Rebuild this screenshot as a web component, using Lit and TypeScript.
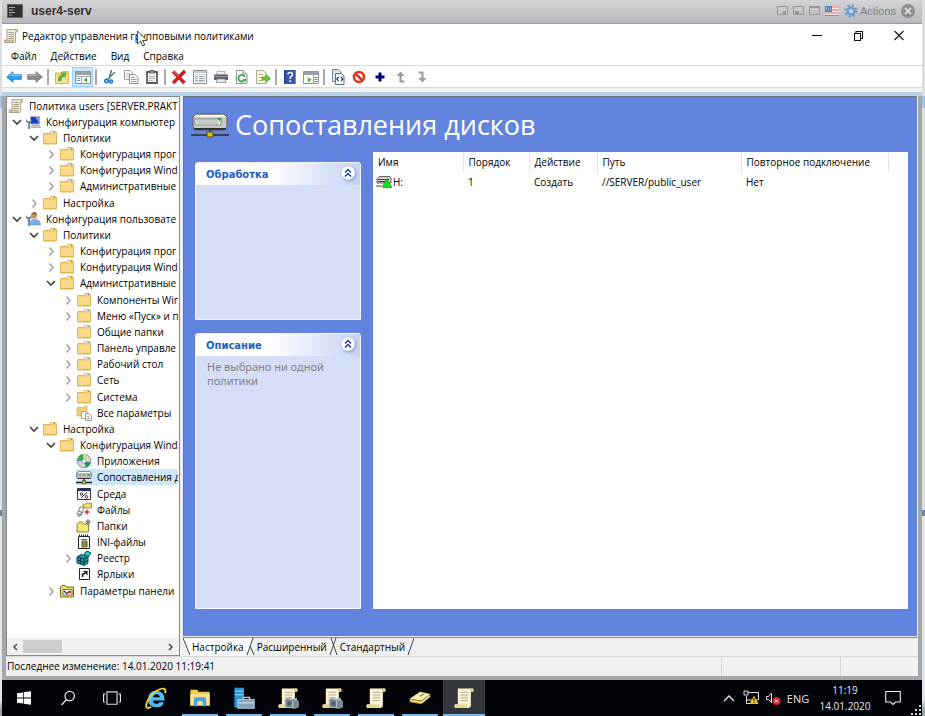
import { LitElement, html, svg, css, nothing } from "lit";
import { customElement, property } from "lit/decorators.js";
import { classMap } from "lit/directives/class-map.js";

const scroll = svg`
  <path d="M4 1.500H14.500V4H12.500V13.500Q12.500 14.500 11 14.500H1.500V12H4Z" fill="#f1ead0" stroke="#9c927a" stroke-width=".8"/>
  <path d="M1.500 12.200H10V14.500H2Z" fill="#d8cb94" stroke="#9c927a" stroke-width=".6"/>
  <path d="M12.500 1.500H14.500V4H12.500Z" fill="#cdbf88"/>
  <path d="M5.500 4.500H11M5.500 6.500H11M5.500 8.500H11M5.500 10.500H11" stroke="#8f8b80" stroke-width=".8"/>`;

const parchment = svg`
  <path d="M3.500 1H14.500Q15.500 2 14.500 3.500H13V14L11.500 15.200H1.500Q.500 14 1.500 12.500H3.500Z" fill="#fbf4d2"/>
  <path d="M12.500 1H14.500Q15.500 2 14.500 3.500H12.500Z" fill="#dcca7c"/>
  <path d="M1.500 12.800H10.500V15.200H1.500Q.500 14 1.500 12.800Z" fill="#e6d68e"/>
  <path d="M5.500 3.800H11M5.500 5.800H11M5.500 7.800H11M5.500 9.800H11" stroke="#b3ac92" stroke-width=".8"/>`;

const folder = svg`
  <path d="M1.500 3.500H8.500V2Q8.500 1.500 9 1.500H13.500L14.500 2.500V14H1.500Z" fill="#f4cd6e" stroke="#dca943" stroke-width=".8"/>
  <path d="M2 5H14V13.500H2Z" fill="#fbdb8b"/><path d="M9.500 2.500H13" stroke="#fff"/><path d="M11.500 2.500H13" stroke="#3e8fe0"/>
  <path d="M2 13.500H14" stroke="#e3b350"/>`;

const page = svg`<path d="M2.500 1.500H9L13 5V14.500H2.500Z" fill="#fff" stroke="#8d9298"/><path d="M9 1.500V5H13" fill="#dfe6ee" stroke="#8d9298"/>`;

const drive = svg`
  <path d="M3 2.500H14L15.500 4V8L14 9.500H2L.500 8V4Z" fill="#bdbdbd" stroke="#777" stroke-width=".8"/>
  <path d="M2.500 3.500H14" stroke="#f4f4f4"/><path d="M2 6H10" stroke="#8f8f8f"/><path d="M11.500 5H14V7H11.500Z" fill="#20b34c"/>
  <path d="M1.500 9.500H14.500" stroke="#333"/><path d="M8 10V13M0 13.500H16" stroke="#222" stroke-width="1.400"/><path d="M6.500 11.500H9.500V15H6.500Z" fill="#d7c22e" stroke="#333" stroke-width=".6"/>`;

const tools = svg`
  <path d="M6 9L8 8L9.500 9H14L15.500 10.500V14.500L13 15.500L6 14.500Z" fill="#74858f" stroke="#aebbc3" stroke-width=".6"/>
  <path d="M7.500 7.500H10V9H7.500ZM12 8H14.500V10H12Z" fill="#9fb0ba"/><circle cx="9" cy="12" r="1.500" fill="#4d5c66"/><path d="M11.500 10V15" stroke="#c8d2d8" stroke-width=".7"/>`;

const ICONS: Record<string, unknown> = {
  scroll,
  folder,
  drive,
  back: svg`<path d="M.7 8L7 2.700V5.700H15.300V10.300H7V13.300Z" fill="#2f9fe8" stroke="#1677bf" stroke-width=".8"/><path d="M3 7.500L6.500 4.600V6.600H14.500" fill="none" stroke="#8fd2fb"/>`,
  forward: svg`<path d="M15.300 8L9 2.700V5.700H.7V10.300H9V13.300Z" fill="#8c8c8c" stroke="#6d6d6d" stroke-width=".8"/><path d="M1.500 6.600H9.500V4.800" fill="none" stroke="#b8b8b8"/>`,
  up: svg`<path d="M1.500 4H7L8.500 2.500H14.500V14.500H1.500Z" fill="#f6cf73" stroke="#dcb562"/><path d="M2 6H14V14H2Z" fill="#f9dc91"/><path d="M4 12V9.500Q4.500 6.500 8 5.500L6.500 3.500L12.500 3.500L11.500 9L10 7.500Q7.500 8.500 7 12Z" fill="#58b238"/>`,
  tree: svg`<path d="M.5 2.500H15.500V14.500H.5Z" fill="#fff" stroke="#90949a"/><path d="M1 3H15V6H1Z" fill="#9aa0a8"/><path d="M1 7.500H15M6.500 8V14" stroke="#a6a6a6"/><path d="M2 9.500H5M2 11.500H5" stroke="#6f8fb5"/><path d="M12 8.500V13.500L8.500 11Z" fill="#40b52c"/>`,
  panes: svg`<path d="M.5 2.500H15.500V14.500H.5Z" fill="#fff" stroke="#90949a"/><path d="M1 3H15V6H1Z" fill="#9aa0a8"/><path d="M10.500 6V14" stroke="#a6a6a6"/><path d="M11.500 8.500H14.500M11.500 10.500H14.500M11.500 12.500H14.500" stroke="#4e80b9"/><path d="M5 8V13.500L8.500 10.700Z" fill="#40b52c"/>`,
  cut: svg`<path d="M9.500 1L7 10M13 3L5.500 10.500" stroke="#5d7fa0" stroke-width="1.600"/><circle cx="4.500" cy="12" r="1.700" fill="none" stroke="#1f7ed2" stroke-width="1.700"/><circle cx="9" cy="12.500" r="1.500" fill="none" stroke="#1f7ed2" stroke-width="1.700"/>`,
  copy: svg`<path d="M1.500 1.500H7L9.500 4V10.500H1.500Z" fill="#fff" stroke="#959ba3"/><path d="M3 4.500H7M3 6.500H8M3 8.500H8" stroke="#bcc5cf"/><path d="M6.500 5.500H12L15 8.500V14.500H6.500Z" fill="#fff" stroke="#808891"/><path d="M8 8.500H12M8 10.500H13.500M8 12.500H13.500" stroke="#79a5cf"/>`,
  paste: svg`<path d="M3 3H13V14H3Z" fill="#eee" stroke="#5c5c5c" stroke-width="1.800"/><path d="M5.500 1.500H10.500V4H5.500Z" fill="#8e8e8e" stroke="#555" stroke-width=".7"/><path d="M5 7.500H11M5 9.500H11M5 11.500H9" stroke="#b5b5b5"/>`,
  remove: svg`<path d="M2 2.500L13.500 14M14 2L2 14" stroke="#d8191c" stroke-width="3.400"/><path d="M2.500 2.500L7.500 7.500" stroke="#f36a66"/>`,
  props: svg`<path d="M1.500 1.500H14.500V14.500H1.500Z" fill="#fff" stroke="#858b92"/><path d="M2 2H14V4H2Z" fill="#c4c9cf"/><path d="M3.500 5.500H12.500V12.500H3.500Z" fill="#f7f7f7" stroke="#b4b9bf" stroke-width=".7"/><path d="M4.500 7.500H5.500M4.500 9.500H5.500M4.500 11.500H5.500" stroke="#3376be"/><path d="M7 7.500H11.500M7 9.500H11.500M7 11.500H11.500" stroke="#999"/>`,
  print: svg`<path d="M4 2.500H12V6H4Z" fill="#f4f4f4" stroke="#999" stroke-width=".8"/><path d="M1 5.500H15V11H1Z" fill="#5d6369"/><path d="M1 7.500H15" stroke="#939aa1"/><path d="M4 10H12L13 13.500H3Z" fill="#dfe9f2" stroke="#888" stroke-width=".8"/>`,
  refresh: svg`${page}<path d="M10.800 8A3.300 3.300 0 1 0 10.500 11" fill="none" stroke="#36ad3c" stroke-width="1.800"/><path d="M12.500 9.500L8.500 10.500L12 13Z" fill="#36ad3c"/>`,
  export: svg`<path d="M1.500 1.500H8L11 4V14.500H1.500Z" fill="#fcf8dc" stroke="#aaa78a"/><path d="M3.500 5.500H8M3.500 8.500H8M3.500 11.500H8" stroke="#a9ad80"/><path d="M7 8H11V5.500L15.500 9.500L11 13.500V11H7Z" fill="#62c92e" stroke="#3b9522" stroke-width=".6"/>`,
  help: svg`<path d="M2 1H14V15H2Z" fill="#3456b3"/><path d="M2.500 1V15" stroke="#203c8a"/><path d="M13.500 1V15" stroke="#6d8bd8"/><path d="M6 5.500Q6 3.500 8.200 3.500Q10.500 3.500 10.500 5.500Q10.500 7 8.300 8.200V10" fill="none" stroke="#fff" stroke-width="1.500"/><path d="M7.500 11.300H9.100V13H7.500Z" fill="#fff"/>`,
  code: svg`<path d="M2.500.5H8L11 3V12.500H2.500Z" fill="#dce7f2" stroke="#6e8193"/><path d="M5.500 4.500H11L14 7V15.500H5.500Z" fill="#fff" stroke="#526c89"/><path d="M8.500 8L6.800 10L8.500 12M11 8L12.800 10L11 12" fill="none" stroke="#202da0" stroke-width="1.200"/>`,
  stop: svg`<circle cx="8" cy="8" r="5" fill="#fff" stroke="#e33218" stroke-width="2.500"/><path d="M4.500 4.500L11.500 11.500" stroke="#e33218" stroke-width="2.500"/>`,
  plus: svg`<path d="M8 3.500V12.500M3.500 8H12.500" stroke="#00007c" stroke-width="3"/>`,
  arrowUp: svg`<path d="M7.500 4V12.500H11.500" fill="none" stroke="#9a9a9a" stroke-width="2"/><path d="M7.500 2.500L11.500 7H3.500Z" fill="#9a9a9a"/>`,
  arrowDown: svg`<path d="M8.500 12V3.500H4.500" fill="none" stroke="#9a9a9a" stroke-width="2"/><path d="M8.500 13.500L12.500 9H4.500Z" fill="#9a9a9a"/>`,
  computer: svg`<path d="M5.500 2.500H14.500V10H5.500Z" fill="#1740c0" stroke="#a9aeb4"/><path d="M10 3H14V9Z" fill="#6e97ef"/><path d="M7 11H14L15.500 13.500H6Z" fill="#c4c8cc" stroke="#888" stroke-width=".5"/><path d="M1 5V8L3 9V15H5V9L6.500 8V5L5 7H2.500Z" fill="#6b89a5"/>`,
  user: svg`<circle cx="9" cy="4.500" r="3" fill="#c98e59"/><path d="M6.500 4Q7 1 9.500 1T12 4L9 3Z" fill="#8a6a50"/><path d="M5 14Q5 8 9 8Q15.500 8 15.500 14Z" fill="#77afe0" stroke="#6a9bc9" stroke-width=".6"/><path d="M1 4V7L3 8.500V15H5V8.500L6.500 7V4L5 6H2.500Z" fill="#6b89a5"/>`,
  allSettings: svg`<path d="M1 2.500H7L8 1.500H11V11H1Z" fill="#f6cf74" stroke="#d8a947" stroke-width=".7"/><path d="M5.500 6.500H9.500L11.500 8.500V13.500H5.500Z" fill="#fff" stroke="#8e9398" stroke-width=".8"/><path d="M9.500 8.500H13L15.500 11V15.500H9.500Z" fill="#fff" stroke="#7b8084" stroke-width=".8"/><path d="M11 11.500H13M11 13.500H14" stroke="#9ea4aa"/>`,
  disc: svg`<circle cx="8" cy="8" r="6.800" fill="#cfd8d8" stroke="#777f80" stroke-width=".8"/><path d="M8 8L1.500 6Q3 1.800 7 1.200Z" fill="#37ac4c"/><path d="M8 8L7 1.200Q9 1 10.500 1.500Z" fill="#d9e46b"/><path d="M8 8L14.700 9.500Q13 14 10 14.600Z" fill="#17975a"/><path d="M8 8L1.500 6L1.200 8Z" fill="#3b7fd0"/><circle cx="8" cy="8" r="2" fill="#fff" stroke="#777" stroke-width=".6"/>`,
  env: svg`<path d="M1.500 2.500H14.500V13.500H1.500Z" fill="#fff" stroke="#333"/><path d="M2 3H14V5H2Z" fill="#26268c"/><path d="M5 11.800L11 6.500" stroke="#333"/><circle cx="5.500" cy="8" r="1.300" fill="none" stroke="#333"/><circle cx="10.500" cy="10.800" r="1.300" fill="none" stroke="#333"/>`,
  files: svg`<path d="M7 2H10L11 1H15.500V6H7Z" fill="#eadc64" stroke="#817929" stroke-width=".7"/><path d="M4 5H8L7 9L3 15L1 12Z" fill="#f8f8ee" stroke="#6c6c66" stroke-width=".8"/><path d="M3 9L7 11M2 12L6 13" stroke="#333" stroke-width=".8"/><path d="M11 7.500V12.500M8.500 10H13.500" stroke="#e01c1c" stroke-width="1.300"/>`,
  folders: svg`<path d="M1 6L3 4H6L8 6H12.500V14H1Z" fill="#eae25c" stroke="#77721f" stroke-width=".8"/><path d="M2 8H12M2 10H12M2 12H12" stroke="#f9f6b5" stroke-width=".7"/><path d="M12 1V7M9 4H15M10 2L14 6M14 2L10 6" stroke="#5f5f55" stroke-width=".8"/>`,
  ini: svg`<path d="M2.500 2.500H13.500V14.500H2.500Z" fill="#fff" stroke="#222"/><path d="M3 1.500H13" stroke="#222" stroke-width="2" stroke-dasharray="1 1"/><path d="M5 5.500H11" stroke="#666"/><path d="M6 7H11V13H6Z" fill="#d2c936" stroke="#333" stroke-width=".8"/><path d="M6 9H11M6 11H11" stroke="#333" stroke-width=".8"/>`,
  registry: svg`<path d="M1 7L5 4.500L12 6V13L8 15.500L1 13Z" fill="#1599a3" stroke="#064c55"/><path d="M1 10L8 12.500L12 10M4.500 7.500V14M8 8.500V15M1 7L8 9L12 6.500" fill="none" stroke="#06353c"/><path d="M8 4L11 1L15 3L12 7Z" fill="#29c3c7" stroke="#064c55"/>`,
  shortcut: svg`<path d="M3.500 2.500H13.500V13.500H3.500Z" fill="#fff" stroke="#222"/><path d="M6.500 11V9Q6.500 7.500 9 7.500" fill="none" stroke="#111" stroke-width="1.500"/><path d="M7 5H11.500V9.500Z" fill="#111"/>`,
  control: svg`<path d="M1.500 4L3 2.500H6.500L8 4H14.500V14H1.500Z" fill="#ebe062" stroke="#77721f"/><path d="M4 6.500H13V12H4Z" fill="#f7f7f7" stroke="#444" stroke-width=".7"/><path d="M5 8L8 10.500L11 8.500" fill="none" stroke="#333" stroke-width="1.300"/><path d="M9 8H12V10H9Z" fill="#b23a2a"/>`,
  mapped: svg`<path d="M3 2.500H14L15 4V9H1V4.500Z" fill="#d2d2d2" stroke="#444" stroke-width=".8"/><path d="M2 5.500H13M2 7.500H12M0 12H14" stroke="#444"/><path d="M11 4.500L16 13.500H6Z" fill="#10df20" stroke="#168a1b" stroke-width=".6"/><path d="M5 11H7V14H5Z" fill="#d7c22e"/>`,
  start: svg`<path d="M1 3.200L7 2.400V7.600H1ZM7.700 2.300L15 1.200V7.600H7.700ZM1 8.400H7V13.600L1 12.800ZM7.700 8.400H15V14.800L7.700 13.700Z" fill="#fff"/>`,
  search: svg`<circle cx="9.700" cy="6" r="4.700" fill="none" stroke="#eee" stroke-width="1.200"/><path d="M6.500 9.500L1.500 15" stroke="#eee" stroke-width="1.200"/>`,
  taskview: svg`<path d="M3.500 2.500H12.500V13.500H3.500ZM2 4.500H.5V11.500H2M14 4.500H15.500V11.500H14" fill="none" stroke="#ddd"/>`,
  ie: svg`<path d="M13.800 11Q12.500 14.800 8.300 14.800Q2.200 14.500 2.200 8.700Q2.500 2.800 8.300 2.800Q14.500 3 14.300 9.800H5.800Q6 12.200 8.400 12.200Q9.900 12.200 10.600 11ZM5.900 7.500H10.800Q10.600 5.300 8.400 5.300Q6.200 5.300 5.900 7.500Z" fill="#4cbcf3" fill-rule="evenodd"/><path d="M14.500 4.500Q15.800 .8 12.500 1.200Q8 2 4 6.800Q.2 12 1 14.500Q1.800 16 4.500 14.500" fill="none" stroke="#f5c838" stroke-width="1.400"/>`,
  explorer: svg`<path d="M1 2H6L7 3.500H15V13.500H1Z" fill="#f3c64d"/><path d="M1 5H15V13.500H1Z" fill="#ffe08a"/><path d="M3.500 9Q3.500 7.500 5 7.500H11Q12.500 7.500 12.500 9V14H10V11Q8 9.500 6 11V14H3.500Z" fill="#43a7df"/>`,
  server: svg`<path d="M1 .5H8V15H1Z" fill="#2593d7"/><path d="M1.500 3H7.500M1.500 5.500H7.500" stroke="#8bd2fa"/><path d="M5.500 9H15.500V15.500H3.500V9Z" fill="#86a4b9" stroke="#c4d4df" stroke-width=".6"/><path d="M7.500 9V7.500H12V9" fill="none" stroke="#b6cad8"/><path d="M4 11.500H15" stroke="#c5d8e4"/>`,
  scrollTask: parchment,
  scrollTools: svg`${parchment}${tools}`,
  book: svg`<path d="M.5 8.500L8 3.500L15.500 5L9 10Z" fill="#f7edb6"/><path d="M.5 8.500L9 10L15.500 5V7.500L9 12.500L.5 11Z" fill="#b59b3a"/><path d="M1 9.800L9 11.300L15 6.500" fill="none" stroke="#fff2bd" stroke-width=".8"/><path d="M7 6.500L10 4.800L11.500 5.200L8.500 7Z" fill="#b09f55"/>`,
};

const icon = (name: string, cls = "i16") =>
  html`<svg class=${cls} viewBox="0 0 16 16" aria-hidden="true">${ICONS[name]}</svg>`;

type Node = [level: number, state: "" | "open" | "closed", icon: string, label: string];

const TREE: Node[] = [
  [0, "", "scroll", "Политика users [SERVER.PRAKT"],
  [1, "open", "computer", "Конфигурация компьютер"],
  [2, "open", "folder", "Политики"],
  [3, "closed", "folder", "Конфигурация прог"],
  [3, "closed", "folder", "Конфигурация Wind"],
  [3, "closed", "folder", "Административные"],
  [2, "closed", "folder", "Настройка"],
  [1, "open", "user", "Конфигурация пользовате"],
  [2, "open", "folder", "Политики"],
  [3, "closed", "folder", "Конфигурация прог"],
  [3, "closed", "folder", "Конфигурация Wind"],
  [3, "open", "folder", "Административные"],
  [4, "closed", "folder", "Компоненты Win"],
  [4, "closed", "folder", "Меню «Пуск» и п"],
  [4, "", "folder", "Общие папки"],
  [4, "closed", "folder", "Панель управле"],
  [4, "closed", "folder", "Рабочий стол"],
  [4, "closed", "folder", "Сеть"],
  [4, "closed", "folder", "Система"],
  [4, "", "allSettings", "Все параметры"],
  [2, "open", "folder", "Настройка"],
  [3, "open", "folder", "Конфигурация Wind"],
  [4, "", "disc", "Приложения"],
  [4, "", "drive", "Сопоставления д"],
  [4, "", "env", "Среда"],
  [4, "", "files", "Файлы"],
  [4, "", "folders", "Папки"],
  [4, "", "ini", "INI-файлы"],
  [4, "closed", "registry", "Реестр"],
  [4, "", "shortcut", "Ярлыки"],
  [3, "closed", "control", "Параметры панели"],
];

const TOOLS: [string, string][][] = [
  [["back", "Назад"], ["forward", "Вперед"]],
  [["up", "Вверх"], ["tree", "Дерево консоли"]],
  [["cut", "Вырезать"], ["copy", "Копировать"], ["paste", "Вставить"]],
  [["remove", "Удалить"], ["props", "Свойства"], ["print", "Печать"], ["refresh", "Обновить"], ["export", "Экспорт"]],
  [["help", "Справка"], ["panes", "Область действий"]],
  [["code", "XML"], ["stop", "Отключить"], ["plus", "Добавить"], ["arrowUp", "Выше"], ["arrowDown", "Ниже"]],
];

const base = css`
  * { box-sizing: border-box; }
  button { font: inherit; color: inherit; background: none; border: 0; padding: 0; margin: 0; }
  svg { display: block; flex: none; }
  .i16 { width: 16px; height: 16px; }
`;

@customElement("policy-tree")
class PolicyTree extends LitElement {
  static styles = [base, css`
    :host { display: flex; flex-direction: column; min-height: 0; overflow: hidden; background: #fff; border: 1px solid #868b92; }
    ul { list-style: none; margin: 0; padding: 0 1px 0 0; flex: 1; min-height: 0; overflow: hidden; }
    li { display: flex; align-items: center; height: 16px; white-space: nowrap; }
    li:nth-child(6n + 1) { height: 17px; }
    .l0 { padding-left: 1px; } .l1 { padding-left: 2px; } .l2 { padding-left: 19px; }
    .l3 { padding-left: 36px; } .l4 { padding-left: 53px; }
    .twist { width: 16px; height: 16px; flex: none; }
    .node { display: flex; align-items: center; flex: 1; min-width: 0; height: 16px; overflow: hidden; }
    .node span { padding-left: 5px; }
    .selected { background: #cce8ff; }
    .bar { display: flex; align-items: center; height: 17px; background: #f0f0f0; flex: none; }
    .bar button { width: 16px; height: 16px; }
    .thumb { width: 39px; height: 13px; background: #cdcdcd; }
    .space { flex: 1; }
  `];
  render() {
    return html`
      <ul role="tree">
        ${TREE.map(([level, state, ic, label]) => html`
          <li class="l${level}" role="treeitem">
            ${level ? (state ? html`<button class="twist" aria-label="Развернуть">
              <svg class="i16" viewBox="0 0 16 16">${state === "open"
                ? svg`<path d="M4 6L8 10L12 6" fill="none" stroke="#404040" stroke-width="1.600"/>`
                : svg`<path d="M6.500 4.500L10 8.500L6.500 12.500" fill="none" stroke="#a2a2a2" stroke-width="1.500"/>`}</svg>
            </button>` : html`<span class="twist"></span>`) : nothing}
            <div class=${classMap({ node: true, selected: ic === "drive" })}>${icon(ic)}<span>${label}</span></div>
          </li>`)}
      </ul>
      <div class="bar">
        <button aria-label="Влево"><svg class="i16" viewBox="0 0 16 16"><path d="M10 5L7 8L10 11" fill="none" stroke="#505050" stroke-width="1.600"/></svg></button>
        <div class="thumb"></div><div class="space"></div>
        <button aria-label="Вправо"><svg class="i16" viewBox="0 0 16 16"><path d="M6 5L9 8L6 11" fill="none" stroke="#505050" stroke-width="1.600"/></svg></button>
      </div>`;
  }
}

@customElement("info-panel")
class InfoPanel extends LitElement {
  @property() heading = "";
  static styles = [base, css`
    :host { display: flex; flex-direction: column; background: #d6def7; border: 1px solid #f4f6fd; border-radius: 3px 3px 0 0; }
    header { display: flex; align-items: center; justify-content: space-between; height: 22px; padding: 0 4px 0 10px;
      background: linear-gradient(to right, #fff 45%, #c6d3f7); border-radius: 2px 2px 0 0; }
    h2 { margin: 0; font: bold 10px "DejaVu Sans", sans-serif; color: #215dc6; }
    .body { padding: 4px 36px 0 11px; font: 11px/14px "Noto Sans", sans-serif; color: #808080; }
    .i16 { filter: drop-shadow(1px 1px 1px #8c9cc8); }
  `];
  render() {
    return html`
      <header><h2>${this.heading}</h2>
        <button aria-label="Свернуть"><svg class="i16" viewBox="0 0 16 16"><circle cx="8" cy="7" r="7" fill="#fff" stroke="#b7c5e5" stroke-width=".6"/>
          <path d="M5 6.500L8 3.500L11 6.500M5 10.500L8 7.500L11 10.500" fill="none" stroke="#1c3fa5" stroke-width="1.500"/></svg></button>
      </header>
      <div class="body"><slot></slot></div>`;
  }
}

@customElement("task-bar")
class TaskBar extends LitElement {
  static styles = [base, css`
    :host { display: flex; align-items: stretch; height: 36px; background: #020409; color: #e8e8e8; flex: none; }
    .app { width: 44px; display: flex; align-items: center; justify-content: center; position: relative; flex: none; }
    .run::after { content: ""; position: absolute; left: 4px; right: 4px; bottom: 0; height: 2px; background: #76b9ed; }
    .active { background: #33363b; width: 42px; margin-left: 1px; }
    .active::after { left: 0; right: 0; }
    .i18 { width: 18px; height: 18px; } .i20 { width: 22px; height: 22px; }
    .tray { margin-left: auto; display: flex; align-items: center; }
    .signs { display: flex; gap: 6px; }
    .lang { width: 34px; font-size: 11px; text-align: center; }
    .clock { width: 60px; line-height: 16px; text-align: center; }
    .note { width: 35px; display: flex; justify-content: center; }
    .grip { align-self: flex-end; width: 12px; height: 12px; }
  `];
  render() {
    const apps: [string, string, string, string][] = [
      ["start", "Пуск", "", "i16"], ["search", "Поиск", "", "i16"], ["taskview", "Представление задач", "", "i18"],
      ["ie", "Internet Explorer", "", "i20"], ["explorer", "Проводник", "run", "i20"], ["server", "Диспетчер серверов", "run", "i20"],
      ["scrollTools", "Управление групповой политикой", "run", "i20"], ["scrollTools", "Редактор", "run", "i20"],
      ["scrollTask", "Политика", "run", "i20"], ["book", "Диски", "run", "i20"], ["scrollTask", "Редактор политик", "run active", "i20"],
    ];
    return html`
      ${apps.map(([ic, label, cls, size]) => html`<button class="app ${cls}" aria-label=${label}>${icon(ic, size)}</button>`)}
      <div class="tray">
        <div class="signs">
          <svg class="i16" viewBox="0 0 16 16"><path d="M3 11L8 6L13 11" fill="none" stroke="#eee" stroke-width="1.300"/></svg>
          <svg class="i16" viewBox="0 0 16 16"><path d="M4 2.500H15.500V10H4M3.500 6V13.500H8" fill="none" stroke="#ddd"/><path d="M1 1H5V5H1Z" fill="#111" stroke="#ddd"/><path d="M11 5.500L15.500 14H6.500Z" fill="#f9bf1c"/><path d="M11 8V11M11 12V13" stroke="#222" stroke-width="1.200"/></svg>
          <svg class="i16" viewBox="0 0 16 16"><path d="M1.500 6.500H3.500L6.500 3V12.500L3.500 9.500H1.500Z" fill="none" stroke="#ddd"/><circle cx="11.500" cy="11" r="4" fill="#df2231"/><path d="M10 9.500L13 12.500M13 9.500L10 12.500" stroke="#fff"/></svg>
        </div>
        <div class="lang">ENG</div>
        <div class="clock">11:19<br />14.01.2020</div>
        <div class="note"><svg class="i16" viewBox="0 0 16 16"><path d="M.7 1.500H15.300V12H10.500L8 14.500L5.500 12H.7Z" fill="none" stroke="#eee" stroke-width="1.100"/></svg></div>
        <svg class="grip" viewBox="0 0 12 12"><path d="M9 1H11V3H9ZM5 5H7V7H5ZM9 5H11V7H9ZM1 9H3V11H1ZM5 9H7V11H5ZM9 9H11V11H9Z" fill="#ddd9c3"/></svg>
      </div>`;
  }
}

@customElement("app-root")
class AppRoot extends LitElement {
  static styles = [base, css`
    :host { display: flex; flex-direction: column; height: 100vh; overflow: hidden; padding: 0 3px 1px 2px;
      background: linear-gradient(#dedede 0 96px, #9fc4e4 96px 108px, #dce3ea 108px 510px, #6b86aa 510px 516px, #e3e7ec 516px 700px, #9aa3ac 710px);
      font: 10px "Open Sans", "Noto Sans", sans-serif; color: #000; }
    .remote { display: flex; align-items: center; height: 24px; flex: none; padding: 0 7px 2px 5px; color: #333;
      background: linear-gradient(#d4d4d6, #b8b8bc); border-bottom: 1px solid #999; }
    .remote h1 { font: bold 12px "Liberation Sans", sans-serif; margin: 0 auto 0 8px; }
    .tools { display: flex; align-items: center; gap: 5px; color: #808084; font: 11px "Liberation Sans", sans-serif; }
    .i11 { width: 11px; height: 11px; } .flag { width: 14px; height: 10px; } .i14 { width: 14px; height: 14px; }
    .actions { display: flex; align-items: center; gap: 2px; }
    .window { flex: 1; min-height: 0; display: flex; flex-direction: column; background: #f0f0f0; }
    .title { position: relative; display: flex; align-items: center; height: 23px; flex: none; padding: 0 15px 0 1px; background: #fff; }
    .title > span { margin: 0 auto 0 3px; }
    .cursor { position: absolute; left: 135px; top: 6px; width: 11px; height: 17px; }
    .win { display: flex; gap: 25px; }
    nav { display: flex; gap: 14px; align-items: center; height: 18px; flex: none; padding: 0 9px 1px; background: #fff; }
    .toolbar { display: flex; align-items: center; height: 23px; flex: none; padding-left: 1px; background: #fff; border: solid #d9d9d9; border-width: 1px 0; }
    .toolbar button { width: 21px; height: 20px; display: flex; align-items: center; justify-content: center; }
    .toolbar .on { background: #cce8ff; border: 1px solid #99d1ff; }
    .sep { width: 2px; height: 16px; margin: 0 2px; background: #aaa; }
    .strip { height: 8px; flex: none; background: linear-gradient(#f0f0f0 4px, #b8d0e8 4px); }
    .main { flex: 1; min-height: 0; display: grid; grid-template-columns: 174px 1fr; gap: 3px; border: solid #a6a6a6; border-width: 0 4px; background: #f0f0f0; }
    .right { min-height: 0; min-width: 0; display: flex; flex-direction: column; }
    .content { flex: 1; min-height: 0; display: flex; flex-direction: column; background: #6384de; padding: 0 9px 27px 11px; border: solid #6b7280; border-width: 1px 0 0 1px; margin-right: 1px; }
    .head { display: flex; align-items: center; height: 55px; flex: none; gap: 6px; }
    .head h1 { margin: 0; color: #fff; font: 27px "Open Sans", sans-serif; }
    .big { width: 38px; height: 26px; margin-left: -4px; }
    .cols { flex: 1; min-height: 0; display: flex; gap: 12px; }
    .side { width: 166px; flex: none; display: flex; flex-direction: column; gap: 13px; padding-top: 10px; }
    .first { flex: 0 0 158px; } .second { flex: 1; }
    .list { flex: 1; background: #fff; }
    table { width: 100%; table-layout: fixed; border-collapse: collapse; }
    th, td { font-weight: normal; text-align: left; height: 20px; padding: 0 0 0 5px; white-space: nowrap; }
    th { border-right: 1px solid #e5e5e5; } th:last-child { border: 0; }
    .c1 { width: 90px; } .c2 { width: 66px; } .c3 { width: 68px; } .c4 { width: 144px; } .c5 { width: 147px; }
    .name { display: flex; align-items: center; gap: 1px; margin-left: -2px; }
    .tabs { display: flex; height: 19px; flex: none; border-top: 1px solid #888; margin-top: 1px; }
    .tabs button { padding: 0 2px; }
    .tabs .current { background: #fff; }
    .edge { width: 7px; height: 18px; } .mid { width: 9px; height: 18px; }
    .status { display: flex; align-items: center; height: 24px; flex: none; border: solid #a6a6a6; border-width: 0 4px 4px; padding-left: 1px; background: linear-gradient(#d7d7d7 1px, #f0f0f0 1px); }
    .status p { margin: 0; flex: 1; }
    .cell { height: 19px; border-left: 1px solid #d7d7d7; } .w1 { width: 119px; } .w2 { width: 78px; }
  `];

  render() {
    return html`
      <header class="remote">
        <svg class="i16" viewBox="0 0 16 16"><path d="M.5 1.500H15.500V14.500H.5Z" fill="#2f3131" stroke="#666"/><path d="M2 4.500H8M2 7H6M2 9.500H8M2 12H5" stroke="#aaa"/></svg>
        <h1>user4-serv</h1>
        <div class="tools">
          ${["M6 6H9V9H6Z", "M2 6H6V9H2Z", "M1 2H10V3H1Z"].map((d) => html`<svg class="i11" viewBox="0 0 11 11"><path d="M.5 1.500H10.500V9.500H.5Z" fill="none" stroke="#97979a"/><path d=${d} fill="#97979a"/></svg>`)}
          <svg class="flag" viewBox="0 0 14 10"><path d="M0 0H14V10H0Z" fill="#eee"/><path d="M0 1H14M0 4H14M0 7H14M0 9.500H14" stroke="#dc7070"/><path d="M0 0H7V6H0Z" fill="#4b7fc9"/><path d="M1 2H6M1 4H6" stroke="#c7d9f2" stroke-dasharray="1 1"/></svg>
          <button class="actions"><svg class="i14" viewBox="0 0 14 14"><circle cx="7" cy="7" r="5.500" fill="none" stroke="#6d9bd0" stroke-width="2.400" stroke-dasharray="2.200 2.120"/><circle cx="7" cy="7" r="3.500" fill="none" stroke="#6d9bd0" stroke-width="2.500"/></svg>Actions</button>
          <button aria-label="Close"><svg class="i14" viewBox="0 0 14 14"><circle cx="7" cy="7" r="7" fill="#8d8d90"/><path d="M4 4L10 10M10 4L4 10" stroke="#ddd" stroke-width="1.800"/></svg></button>
        </div>
      </header>
      <div class="window">
        <div class="title">
          ${icon("scroll")}<span>Редактор управления групповыми политиками</span>
          <div class="win">
            ${["M3 7.500H13", "M4.500 5.500H10.500V12.500H4.500ZM6 5.500V3.500H12.500V10.500H11", "M3.500 3L12.500 12M12.500 3L3.500 12"].map((d, i) => html`
              <button aria-label=${["Свернуть", "Развернуть", "Закрыть"][i]}><svg class="i16" viewBox="0 0 16 16"><path d=${d} fill="none" stroke="#111" stroke-width="1.100"/></svg></button>`)}
          </div>
          <svg class="cursor" viewBox="0 0 11 17"><path d="M.5 1V14L3.500 11.200L5.700 16L7.800 15L5.700 10.500H10Z" fill="#fff" stroke="#222" stroke-width=".8"/></svg>
        </div>
        <nav>${["Файл", "Действие", "Вид", "Справка"].map((t) => html`<button>${t}</button>`)}</nav>
        <div class="toolbar">
          ${TOOLS.map((group, g) => html`${g ? html`<span class="sep"></span>` : nothing}
            ${group.map(([ic, label]) => html`<button class=${classMap({ on: ic === "tree" })} aria-label=${label}>${icon(ic)}</button>`)}`)}
        </div>
        <div class="strip"></div>
        <div class="main">
          <policy-tree></policy-tree>
          <div class="right">
            <main class="content">
              <div class="head">
                <svg class="big" viewBox="0 0 38 26"><path d="M5 2H33L36 5V15L33 18H5L2 15V5Z" fill="#c7c7c5" stroke="#5c5c5c"/><path d="M5 3H33L35 5H3Z" fill="#f5f5f5"/><path d="M4 7H30V13H4Z" fill="#e4e4e1" stroke="#909090"/><path d="M6 9H27M6 11H27" stroke="#aaa"/><path d="M26 6H31L28.500 9Z" fill="#14a943"/><path d="M3 17H35" stroke="#333" stroke-width="2"/><path d="M19 18V22M0 23H38" stroke="#354457" stroke-width="2"/><path d="M16 20H22V25H16Z" fill="#d6bd2e" stroke="#54511b"/></svg>
                <h1>Сопоставления дисков</h1>
              </div>
              <div class="cols">
                <div class="side">
                  <info-panel class="first" heading="Обработка"></info-panel>
                  <info-panel class="second" heading="Описание">Не выбрано ни одной политики</info-panel>
                </div>
                <div class="list">
                  <table>
                    <colgroup><col class="c1" /><col class="c2" /><col class="c3" /><col class="c4" /><col class="c5" /><col /></colgroup>
                    <thead><tr>${["Имя", "Порядок", "Действие", "Путь", "Повторное подключение", ""].map((t) => html`<th>${t}</th>`)}</tr></thead>
                    <tbody><tr><td><div class="name">${icon("mapped")}H:</div></td>
                      ${["1", "Создать", "//SERVER/public_user", "Нет", ""].map((t) => html`<td>${t}</td>`)}</tr></tbody>
                  </table>
                </div>
              </div>
            </main>
            <div class="tabs">
              <svg class="edge" viewBox="0 0 7 18"><path d="M0 0H7V17Z" fill="#fff"/><path d="M0 0L7 17" stroke="#444"/></svg>
              <button class="current">Настройка</button>
              <svg class="mid" viewBox="0 0 9 18"><path d="M0 0H7L1 17H0Z" fill="#fff"/><path d="M7 0L1 17M4 8L8 17" fill="none" stroke="#444"/></svg>
              <button>Расширенный</button>
              <svg class="mid" viewBox="0 0 9 18"><path d="M7 0L1 17M2 0L8 17" stroke="#444"/></svg>
              <button>Стандартный</button>
              <svg class="edge" viewBox="0 0 7 18"><path d="M7 0L1 17" stroke="#444"/></svg>
            </div>
          </div>
        </div>
        <footer class="status"><p>Последнее изменение: 14.01.2020 11:19:41</p><div class="cell w1"></div><div class="cell w2"></div></footer>
      </div>
      <task-bar></task-bar>`;
  }
}
